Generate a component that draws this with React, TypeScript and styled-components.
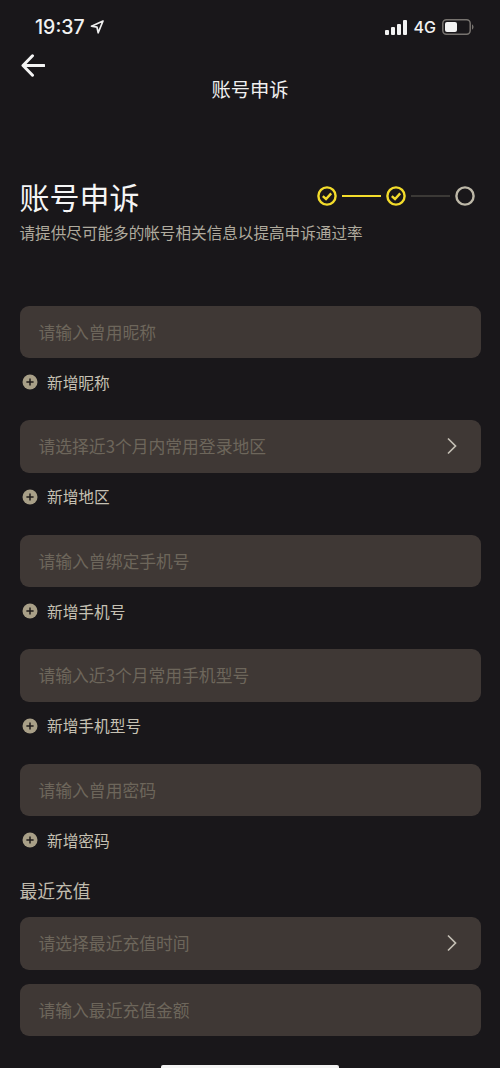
import styled, { createGlobalStyle } from "styled-components";

const GlobalStyle = createGlobalStyle`
  html, body {
    margin: 0;
    padding: 0;
    background: #19171a;
  }
  * {
    box-sizing: border-box;
  }
`;

const ADD_GROUPS: { placeholder: string; add: string; arrow?: boolean }[] = [
  { placeholder: "请输入曾用昵称", add: "新增昵称" },
  { placeholder: "请选择近3个月内常用登录地区", add: "新增地区", arrow: true },
  { placeholder: "请输入曾绑定手机号", add: "新增手机号" },
  { placeholder: "请输入近3个月常用手机型号", add: "新增手机型号" },
  { placeholder: "请输入曾用密码", add: "新增密码" },
];

function Chevron() {
  return (
    <svg width="12" height="18" viewBox="0 0 12 18" fill="none">
      <path d="M2 1.5 L9.5 9 L2 16.5" stroke="#c4bfb4" strokeWidth="1.7" />
    </svg>
  );
}

function PlusIcon() {
  return (
    <svg width="16" height="16" viewBox="0 0 16 16">
      <circle cx="8" cy="8" r="7.5" fill="#a89f87" />
      <path d="M8 4.4 V11.6 M4.4 8 H11.6" stroke="#1f1c1b" strokeWidth="1.5" />
    </svg>
  );
}

function StepDone() {
  return (
    <svg width="20" height="20" viewBox="0 0 20 20" fill="none">
      <circle cx="10" cy="10" r="8.6" stroke="#f3dc2b" strokeWidth="2.4" />
      <path d="M5.8 10.2 L9 13 L14.2 7.4" stroke="#f3dc2b" strokeWidth="2.4" />
    </svg>
  );
}

function StepTodo() {
  return (
    <svg width="20" height="20" viewBox="0 0 20 20" fill="none">
      <circle cx="10" cy="10" r="8.6" stroke="#bdb8a8" strokeWidth="2.4" />
    </svg>
  );
}

function App() {
  return (
    <Page>
      <GlobalStyle />
      <StatusBar>
        <TimeGroup>
          <Time>19:37</Time>
          <svg width="14" height="14" viewBox="0 0 14 14" fill="none">
            <path
              d="M13 1 L1.5 6.2 L7 7.2 L8.2 12.8 Z"
              stroke="#eeeeee"
              strokeWidth="1.7"
              strokeLinejoin="round"
            />
          </svg>
        </TimeGroup>
        <StatusRight>
          <svg width="23" height="15" viewBox="0 0 23 15" fill="#f2f2f2">
            <rect x="0" y="10" width="4" height="5" rx="1" />
            <rect x="6" y="7" width="4" height="8" rx="1" />
            <rect x="12" y="4" width="4" height="11" rx="1" />
            <rect x="18" y="0" width="4" height="15" rx="1" />
          </svg>
          <Network>4G</Network>
          <svg width="33" height="16" viewBox="0 0 33 16" fill="none">
            <rect x="0.8" y="0.8" width="27.4" height="14.4" rx="3.6" stroke="#77736f" strokeWidth="1.5" />
            <rect x="3" y="3" width="12" height="10" rx="2" fill="#f2f2f2" />
            <path d="M30 5.5 C32 6 32 10 30 10.5 Z" fill="#77736f" />
          </svg>
        </StatusRight>
      </StatusBar>

      <NavBar>
        <BackButton>
          <svg width="24" height="23" viewBox="0 0 24 23" fill="none">
            <path
              d="M11.5 1.8 L2 11.5 L11.5 21.2 M2.5 11.5 H23"
              stroke="#f4f4f4"
              strokeWidth="3"
              strokeLinecap="round"
              strokeLinejoin="round"
            />
          </svg>
        </BackButton>
        <NavTitle>账号申诉</NavTitle>
      </NavBar>

      <Header>
        <HeadingRow>
          <Heading>账号申诉</Heading>
          <Steps>
            <StepDone />
            <StepLine $active />
            <StepDone />
            <StepLine />
            <StepTodo />
          </Steps>
        </HeadingRow>
        <Subtitle>请提供尽可能多的帐号相关信息以提高申诉通过率</Subtitle>
      </Header>

      <Form>
        {ADD_GROUPS.map((group) => (
          <Group key={group.add}>
            <Field>
              <Placeholder>{group.placeholder}</Placeholder>
              {group.arrow && <Chevron />}
            </Field>
            <AddRow>
              <PlusIcon />
              <span>{group.add}</span>
            </AddRow>
          </Group>
        ))}
        <SectionLabel>最近充值</SectionLabel>
        <Stack>
          <Field>
            <Placeholder>请选择最近充值时间</Placeholder>
            <Chevron />
          </Field>
          <Field>
            <Placeholder>请输入最近充值金额</Placeholder>
          </Field>
        </Stack>
      </Form>

      <HomeIndicator />
    </Page>
  );
}

const Page = styled.div`
  position: relative;
  width: 500px;
  height: 1068px;
  overflow: hidden;
  background: #19171a;
  color: #fff;
  font-family: "Noto Sans CJK SC", "Noto Sans", sans-serif;
`;

const StatusBar = styled.div`
  display: flex;
  align-items: center;
  justify-content: space-between;
  height: 54px;
  padding: 0 25px 0 35px;
`;

const TimeGroup = styled.div`
  display: flex;
  align-items: center;
  gap: 5px;
`;

const Time = styled.span`
  font-family: Inter, "Liberation Sans", sans-serif;
  font-size: 19.5px;
  font-weight: 500;
  color: #f2f2f2;
`;

const StatusRight = styled.div`
  display: flex;
  align-items: center;
  gap: 6px;
`;

const Network = styled.span`
  font-family: Inter, "Liberation Sans", sans-serif;
  font-size: 16px;
  font-weight: 500;
  color: #f2f2f2;
`;

const NavBar = styled.div`
  display: grid;
  grid-template-columns: 1fr auto 1fr;
  height: 49px;
  padding: 0 21px;
`;

const BackButton = styled.div`
  display: flex;
  align-items: flex-start;
`;

const NavTitle = styled.div`
  align-self: end;
  height: 28px;
  font-size: 19.3px;
  line-height: 28px;
  color: #efefef;
`;

const Header = styled.div`
  padding: 0 19px 0 19.5px;
  margin-top: 71px;
`;

const HeadingRow = styled.div`
  display: flex;
  align-items: center;
  justify-content: space-between;
  height: 44px;
  padding-right: 6px;
`;

const Heading = styled.h1`
  margin: 0;
  font-size: 30px;
  font-weight: 400;
  line-height: 44px;
  color: #f5f5f5;
`;

const Steps = styled.div`
  display: flex;
  align-items: center;
  gap: 5px;
`;

const StepLine = styled.div<{ $active?: boolean }>`
  width: 39px;
  height: 2.5px;
  background: ${({ $active }) => ($active ? "#f3dc2b" : "#3b3936")};
`;

const Subtitle = styled.p`
  margin: 2px 0 0;
  font-size: 15.6px;
  line-height: 24px;
  color: #b0ab9e;
  white-space: nowrap;
`;

const Form = styled.div`
  padding: 0 19.5px;
  margin-top: 61.5px;
`;

const Group = styled.div`
  & + & {
    margin-top: 14px;
  }
`;

const Field = styled.div`
  display: flex;
  align-items: center;
  justify-content: space-between;
  height: 52.5px;
  padding: 0 23px 0 19px;
  border-radius: 9px;
  background: #3f3835;
`;

const Placeholder = styled.span`
  font-size: 16.8px;
  color: #6d665b;
  white-space: nowrap;
`;

const AddRow = styled.div`
  display: flex;
  align-items: center;
  gap: 9.5px;
  height: 48px;
  padding: 14px 0 14px 2px;
  font-size: 15.7px;
  color: #c6c1b3;
`;

const SectionLabel = styled.div`
  margin-top: 11px;
  height: 30px;
  font-size: 17.8px;
  line-height: 30px;
  color: #c0bbad;
`;

const Stack = styled.div`
  display: flex;
  flex-direction: column;
  gap: 14px;
  margin-top: 12px;
`;

const HomeIndicator = styled.div`
  position: absolute;
  left: 161px;
  bottom: 0;
  width: 178px;
  height: 3px;
  border-radius: 2px 2px 0 0;
  background: #f4f4f4;
`;

export default App;
